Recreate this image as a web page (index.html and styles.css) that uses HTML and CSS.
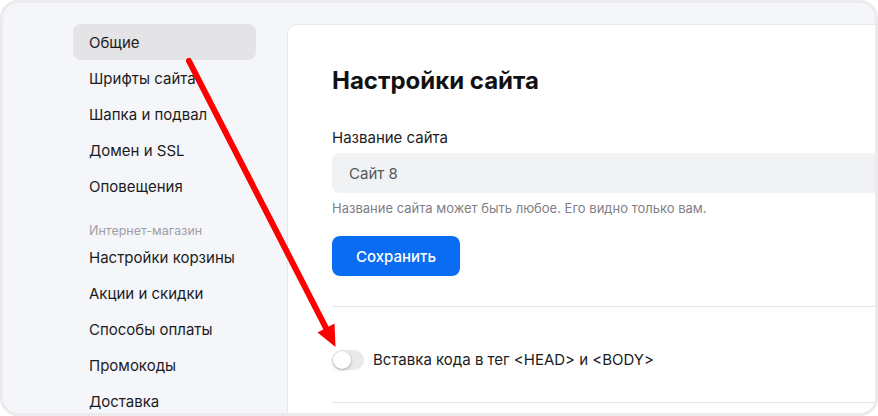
FILE: index.html
```html
<!DOCTYPE html>
<html lang="ru">
<head>
<meta charset="utf-8">
<title>Настройки сайта</title>
<link rel="stylesheet" href="styles.css">
</head>
<body>
<div class="frame">
  <nav class="sidebar">
    <a class="nav-item active">Общие</a>
    <a class="nav-item">Шрифты сайта</a>
    <a class="nav-item">Шапка и подвал</a>
    <a class="nav-item">Домен и SSL</a>
    <a class="nav-item">Оповещения</a>
    <div class="nav-label">Интернет-магазин</div>
    <a class="nav-item">Настройки корзины</a>
    <a class="nav-item">Акции и скидки</a>
    <a class="nav-item">Способы оплаты</a>
    <a class="nav-item">Промокоды</a>
    <a class="nav-item">Доставка</a>
  </nav>
  <main class="card">
    <h1 class="title">Настройки сайта</h1>
    <label class="field-label">Название сайта</label>
    <div class="input">Сайт 8</div>
    <p class="hint">Название сайта может быть любое. Его видно только вам.</p>
    <button class="btn">Сохранить</button>
    <div class="toggle-row">
      <span class="toggle"><span class="knob"></span></span>
      <span class="toggle-text">Вставка кода в тег &lt;HEAD&gt; и &lt;BODY&gt;</span>
    </div>
  </main>
  <svg class="arrow" width="878" height="416" viewBox="0 0 878 416">
    <line x1="189" y1="61" x2="327" y2="330" stroke="#ff0000" stroke-width="6" stroke-linecap="round"/>
    <polygon points="335.5,347 317.5,332.5 334.5,323.5" fill="#ff0000"/>
  </svg>
</div>
</body>
</html>
```
FILE: styles.css
```css
* { box-sizing: border-box; }
html, body { margin: 0; padding: 0; background: #ffffff; }
body { font-family: Inter, "Noto Sans", sans-serif; color: #1c1c1e; }

.frame {
  position: relative;
  width: 878px;
  height: 416px;
  border: 3px solid #ebebed;
  border-radius: 18px;
  background: #f5f6fa;
  overflow: hidden;
  display: flex;
  align-items: flex-start;
  padding: 21px 0 0 70px;
  gap: 31px;
}

.sidebar {
  width: 183px;
  flex: none;
  display: flex;
  flex-direction: column;
}

.nav-item {
  display: flex;
  align-items: center;
  height: 36px;
  padding-left: 16px;
  border-radius: 8px;
  font-size: 15px;
  color: #1c1c1e;
}
.nav-item.active { background: #e4e4e7; }

.nav-label {
  margin-top: 19px;
  height: 16px;
  line-height: 16px;
  padding-left: 16px;
  font-size: 12.5px;
  color: #a0a0a6;
}

.card {
  flex: none;
  width: 640px;
  height: 460px;
  background: #ffffff;
  border: 1px solid #e6e7eb;
  border-radius: 10px;
  padding: 40px 0 0 44px;
}

.title {
  margin: 0;
  font-size: 24px;
  line-height: 32px;
  font-weight: 700;
  color: #111113;
}

.field-label {
  display: block;
  margin-top: 31px;
  font-size: 15px;
  line-height: 20px;
  color: #1c1c1e;
}

.input {
  margin-top: 5px;
  height: 40px;
  display: flex;
  align-items: center;
  padding-left: 17px;
  background: #f1f2f4;
  border-radius: 8px 0 0 8px;
  font-size: 15px;
  color: #55565a;
}

.hint {
  margin: 7px 0 0;
  font-size: 13px;
  line-height: 16px;
  color: #808087;
}

.btn {
  display: block;
  margin-top: 20px;
  width: 128px;
  height: 40px;
  border: 0;
  border-radius: 8px;
  background: #0a6cf2;
  color: #ffffff;
  font-family: inherit;
  font-size: 15px;
  font-weight: 500;
  padding: 0;
}

.toggle-row {
  margin-top: 30px;
  border-top: 1px solid #e4e7ea;
  border-bottom: 1px solid #e4e7ea;
  height: 97px;
  display: flex;
  align-items: center;
  padding-top: 10px;
}

.toggle {
  position: relative;
  width: 32px;
  height: 20px;
  border-radius: 10px;
  background: #e9e9ec;
  flex: none;
}
.knob {
  position: absolute;
  left: 1px;
  top: 1px;
  width: 18px;
  height: 18px;
  border-radius: 50%;
  background: #ffffff;
  box-shadow: 0 1px 3px rgba(0, 0, 0, 0.3);
}

.toggle-text {
  margin-left: 9px;
  font-size: 15px;
  color: #1c1c1e;
}

.arrow {
  position: absolute;
  left: -3px;
  top: -3px;
  pointer-events: none;
}
```
